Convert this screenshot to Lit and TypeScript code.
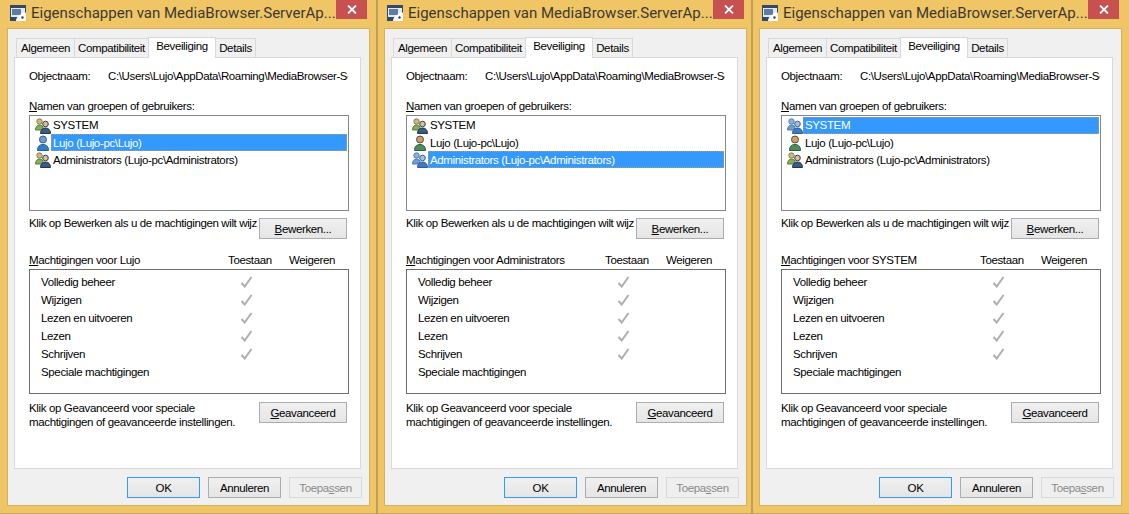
import { LitElement, html, css, svg } from "lit";
import { customElement, property } from "lit/decorators.js";

const groupIcon = (dim: boolean) => svg`<svg class="ico" width="16" height="16" viewBox="0 0 16 16">
  <circle cx="4.500" cy="3.500" r="2.700" fill=${dim ? "#8fb0d8" : "#d9b382"} stroke=${dim ? "#4d7db5" : "#6f8a4a"} stroke-width="1"/>
  <path d="M0.500 12c0-3 1.500-5 4-5s3.500 1.500 3.500 3.500v1.500z" fill=${dim ? "#6f9bd0" : "#86ad5a"} stroke=${dim ? "#4d7db5" : "#5c7d3a"} stroke-width="1"/>
  <circle cx="10.500" cy="6" r="2.800" fill=${dim ? "#a8c0e0" : "#e0bd92"} stroke=${dim ? "#305f98" : "#2c3e50"} stroke-width="1"/>
  <path d="M5.500 15.500c0-3.500 2-5.500 5-5.500s5 2 5 5.500z" fill=${dim ? "#3d79c4" : "#3b5b80"} stroke=${dim ? "#305f98" : "#22384f"} stroke-width="1"/>
</svg>`;

const userIcon = (sel: boolean) => svg`<svg class="ico" width="16" height="16" viewBox="0 0 16 16">
  <circle cx="8" cy="4.500" r="3.500" fill=${sel ? "#6d9bd0" : "#c99f72"} stroke=${sel ? "#2f5f98" : "#5a4a3a"} stroke-width="1"/>
  <path d="M2.500 15.500c0-4 2-6 5.500-6s5.500 2 5.500 6z" fill=${sel ? "#2f7fc8" : "#4f8a5c"} stroke=${sel ? "#25609c" : "#2f5f3c"} stroke-width="1"/>
</svg>`;

const appIcon = svg`<svg width="16" height="16" viewBox="0 0 16 16">
  <rect width="16" height="16" fill="#2f4a6b"/>
  <rect x="1" y="3" width="14" height="9" fill="#e4e9ef"/>
  <rect x="2" y="4" width="9" height="6" fill="#5f7da0"/>
  <path d="M6 16c0-3 2-5 4-6l2-2c2-1 3-1 4 0v8z" fill="#fff"/>
  <path d="M11 12l2-1 1 2-2 1z" fill="#2f4a6b"/>
</svg>`;

const check = svg`<svg width="13" height="12" viewBox="0 0 13 12"><path d="M1.500 7l3.200 3.500L11.500 1" fill="none" stroke="#aeaeae" stroke-width="2"/></svg>`;

@customElement("prop-dialog")
class PropDialog extends LitElement {
  @property() who = "";
  @property({ type: Number }) selected = 0;

  static styles = css`
    :host { display: flex; flex-direction: column; flex: none; box-sizing: border-box; height: 514px; padding-left: 6px;
      background: #f0c566; border-bottom: 1px solid #c9a85b; font: 11.500px/15px "Liberation Sans", Arial, sans-serif; color: #000; letter-spacing: -0.36px; }
    :host([first]) { padding-left: 7px; }
    .title { display: flex; height: 28px; flex: none; padding-left: 3px; align-items: flex-start; width: 360px; }
    .appico { margin-top: 5px; width: 16px; height: 16px; flex: none; }
    .t { font: 15px/20px Roboto, "Liberation Sans", sans-serif; letter-spacing: 0; color: #3b3a30; margin: 3px 0 0 5px; width: 305px; white-space: nowrap; overflow: hidden; flex: none; }
    .close { width: 31px; height: 19px; background: #c75050; flex: none; display: flex; align-items: center; justify-content: center; }
    .client { flex: none; width: 363px; height: 478px; box-sizing: border-box; background: #f0f0f0; border: 1px solid #d2b25f; padding: 8px 0 0 6px; }
    .tabs { display: flex; height: 20px; align-items: flex-end; padding-left: 2px; position: relative; z-index: 1; }
    .tab { height: 19px; box-sizing: border-box; background: #f0f0f0; border: 1px solid #d9d9d9; border-bottom: none; margin-right: -1px; display: flex; justify-content: center; padding-top: 2px; white-space: nowrap; flex: none; }
    .tab.on { height: 21px; background: #fff; margin-bottom: -1px; padding-top: 1px; position: relative; z-index: 2; }
    .panel { height: 412px; width: 347px; box-sizing: border-box; background: #fff; border: 1px solid #d9d9d9; padding: 11px 14px 0 14px; }
    .objrow { display: flex; height: 15px; }
    .objrow .l { width: 79px; flex: none; }
    .path { width: 240px; overflow: hidden; white-space: nowrap; flex: none; }
    .lbl { margin-top: 15px; height: 15px; }
    u { text-underline-offset: 1px; }
    .list { width: 320px; height: 96px; box-sizing: border-box; border: 1px solid #828790; margin-top: 1px; padding: 1px 1px 0 5px; }
    .item { display: flex; height: 17px; align-items: center; white-space: nowrap; }
    .ico { flex: none; width: 16px; height: 16px; }
    .name { flex: 1; height: 17px; box-sizing: border-box; padding: 0 2px; display: flex; align-items: center; }
    .item + .item .name { padding-top: 1px; }
    .item.sel .name { color: #fff; background:
      repeating-linear-gradient(90deg, #b59a6a 0 1px, transparent 1px 2px) top / 100% 1px no-repeat,
      repeating-linear-gradient(90deg, #b59a6a 0 1px, transparent 1px 2px) bottom / 100% 1px no-repeat,
      repeating-linear-gradient(0deg, #b59a6a 0 1px, transparent 1px 2px) left / 1px 100% no-repeat,
      repeating-linear-gradient(0deg, #b59a6a 0 1px, transparent 1px 2px) right / 1px 100% no-repeat,
      #3399ff; }
    .editrow { display: flex; margin-top: 7px; height: 21px; justify-content: space-between; align-items: flex-start; width: 318px; }
    .editrow .txt { width: 228px; overflow: hidden; white-space: nowrap; margin-top: -2px; letter-spacing: -0.38px; }
    .btn { width: 88px; height: 21px; box-sizing: border-box; border: 1px solid #adadad; padding-top: 1px; background: linear-gradient(#f0f0f0, #e5e5e5); display: flex; align-items: center; justify-content: center; flex: none; white-space: nowrap; }
    .permhead { display: grid; grid-template-columns: 199px 61px 1fr; width: 320px; margin-top: 14px; height: 15px; white-space: nowrap; }
    .perm { width: 320px; height: 125px; box-sizing: border-box; border: 1px solid #6e6e6e; margin-top: 1px; padding: 3px 0 0 11px; }
    .prow { display: grid; grid-template-columns: 199px 20px; height: 18px; align-items: center; }
    .prow .c { display: flex; height: 18px; align-items: center; }
    .adv { display: flex; justify-content: space-between; align-items: flex-start; width: 318px; margin-top: 8px; height: 32px; }
    .adv .txt { line-height: 14px; margin-top: -1px; }
    .foot { display: flex; gap: 8px; margin-top: 8px; padding-left: 113px; }
    .fb { width: 73px; height: 21px; box-sizing: border-box; border: 1px solid #adadad; padding-top: 1px; background: linear-gradient(#f0f0f0, #e5e5e5); display: flex; align-items: center; justify-content: center; white-space: nowrap; flex: none; }
    .fb.def { border-color: #3399ff; }
    .fb.off { border-color: #d9d9d9; background: #efefef; color: #8a8a8a; }
  `;

  render() {
    const items = [
      ["SYSTEM", true],
      ["Lujo (Lujo-pc\\Lujo)", false],
      ["Administrators (Lujo-pc\\Administrators)", true],
    ] as [string, boolean][];
    const perms = ["Volledig beheer", "Wijzigen", "Lezen en uitvoeren", "Lezen", "Schrijven", "Speciale machtigingen"];
    const tabs = [["Algemeen", 59], ["Compatibiliteit", 75], ["Beveiliging", 68], ["Details", 41]] as [string, number][];
    return html`
      <div class="title">
        <span class="appico">${appIcon}</span>
        <span class="t">Eigenschappen van MediaBrowser.ServerAp...</span>
        <span class="close"><svg width="10" height="9" viewBox="0 0 10 9"><path d="M1 0.500l8 8M9 0.500l-8 8" stroke="#fff" stroke-width="1.800"/></svg></span>
      </div>
      <div class="client">
        <div class="tabs">
          ${tabs.map(([t, w], i) => html`<div class="tab ${i === 2 ? "on" : ""}" style="width:${w}px">${t}</div>`)}
        </div>
        <div class="panel">
          <div class="objrow"><span class="l">Objectnaam:</span><span class="path">C:\\Users\\Lujo\\AppData\\Roaming\\MediaBrowser-Server</span></div>
          <div class="lbl"><u>N</u>amen van groepen of gebruikers:</div>
          <div class="list">
            ${items.map(([n, g], i) => {
              const sel = i === this.selected;
              return html`<div class="item ${sel ? "sel" : ""}">
                ${g ? groupIcon(sel) : userIcon(sel)}
                <span class="name">${n}</span>
              </div>`;
            })}
          </div>
          <div class="editrow">
            <span class="txt">Klik op Bewerken als u de machtigingen wilt wijzigen</span>
            <span class="btn"><span><u>B</u>ewerken...</span></span>
          </div>
          <div class="permhead"><span><u>M</u>achtigingen voor ${this.who}</span><span>Toestaan</span><span>Weigeren</span></div>
          <div class="perm">
            ${perms.map((p, i) => html`<div class="prow"><span>${p}</span><span class="c">${i < 5 ? check : ""}</span></div>`)}
          </div>
          <div class="adv">
            <span class="txt">Klik op Geavanceerd voor speciale<br />machtigingen of geavanceerde instellingen.</span>
            <span class="btn"><span><u>G</u>eavanceerd</span></span>
          </div>
        </div>
        <div class="foot">
          <span class="fb def">OK</span>
          <span class="fb">Annuleren</span>
          <span class="fb off"><span>Toepa<u>s</u>sen</span></span>
        </div>
      </div>
    `;
  }
}

@customElement("app-root")
class AppRoot extends LitElement {
  static styles = css`
    :host { display: flex; width: 1129px; height: 514px; overflow: hidden; background: #f0c566; }
    .sep { flex: none; width: 2px; background: #bfa05a; }
    .w1 { width: 376px; }
    .w2 { width: 373px; }
    .w3 { width: 376px; }
  `;
  render() {
    return html`
      <prop-dialog class="w1" first who="Lujo" selected="1"></prop-dialog>
      <div class="sep"></div>
      <prop-dialog class="w2" who="Administrators" selected="2"></prop-dialog>
      <div class="sep"></div>
      <prop-dialog class="w3" who="SYSTEM" selected="0"></prop-dialog>
    `;
  }
}
